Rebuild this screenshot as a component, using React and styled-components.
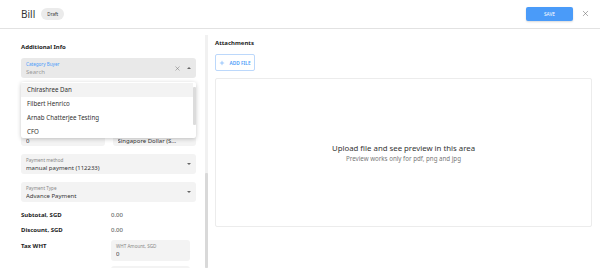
import React from "react";
import styled, { createGlobalStyle } from "styled-components";
import { X, Plus } from "lucide-react";

const GlobalStyle = createGlobalStyle`
	body {
		margin: 0;
		background: #fff;
		font-family: "Noto Sans", "Open Sans", sans-serif;
		color: #333;
		overflow: hidden;
	}
	* { box-sizing: border-box; }
`;

const Page = styled.div`
	width: 600px;
	height: 268px;
	display: flex;
	flex-flow: column nowrap;
	overflow: hidden;
`;

const Header = styled.header`
	height: 29px;
	flex: 0 0 29px;
	display: flex;
	align-items: center;
	padding: 0 10px 1px 21px;
	border-bottom: 1px solid #e2e2e2;
`;

const Title = styled.h1`
	margin: 0;
	font-size: 10px;
	font-weight: 400;
	color: #333;
	line-height: 14px;
`;

const Chip = styled.span`
	margin-left: 6px;
	height: 12px;
	width: 23px;
	text-align: center;
	border-radius: 6px;
	background: #ebebeb;
	font-size: 4.5px;
	line-height: 12px;
	color: #333;
`;

const Spacer = styled.div`
	flex: 1;
`;

const SaveButton = styled.button`
	width: 47px;
	height: 14px;
	border: none;
	border-radius: 2px;
	background: #4a9bf9;
	color: #fff;
	font-family: inherit;
	font-size: 4.8px;
	padding: 0;
	box-shadow: 0 1px 2px rgba(0, 0, 0, 0.15);
`;

const IconButton = styled.span`
	display: flex;
	margin-left: 8px;
	color: #666;
`;

const Body = styled.div`
	flex: 1;
	display: flex;
	flex-flow: row nowrap;
	min-height: 0;
`;

const LeftPane = styled.div`
	width: 175px;
	flex: none;
	margin-left: 21px;
	padding-top: 13px;
	display: flex;
	flex-flow: column nowrap;
`;

const Scrollbar = styled.div`
	width: 3px;
	flex: none;
	margin: 6px 0 0 9px;
	background: #f1f1f1;
	display: flex;
	flex-flow: column nowrap;
	justify-content: flex-end;
`;

const Thumb = styled.div`
	height: ${(p) => p.$h}px;
	background: #d9d9d9;
	border-radius: 1px;
`;

const RightPane = styled.div`
	flex: 1;
	margin-left: 7px;
	padding: 9px 8px 0 0;
	display: flex;
	flex-flow: column nowrap;
	align-items: flex-start;
`;

const SectionTitle = styled.h2`
	margin: 0;
	font-size: 6px;
	line-height: 10px;
	font-weight: 700;
	color: #222;
`;

const Stack = styled.div`
	margin-top: 6px;
	display: flex;
	flex-flow: column nowrap;
	gap: 8px;
`;

const Row = styled.div`
	display: flex;
	gap: 8px;
`;

const FieldBox = styled.div`
	position: relative;
	flex: ${(p) => (p.$grow ? "1 1 0" : "none")};
	min-width: 0;
	height: ${(p) => p.$h || 20}px;
	border-radius: 3px;
	background: ${(p) => (p.$focused ? "#e9e9e9" : "#f3f3f3")};
	padding: 3px 12px 0 5px;
	display: flex;
	flex-flow: column nowrap;
	justify-content: ${(p) => (p.$bottom ? "flex-end" : "flex-start")};
`;

const FieldLabel = styled.span`
	font-size: 4.6px;
	line-height: 6px;
	color: ${(p) => (p.$focused ? "#4a9bf9" : "#888")};
`;

const FieldValue = styled.span`
	font-size: 6px;
	line-height: 10px;
	color: ${(p) => (p.$muted ? "#999" : "#333")};
	white-space: nowrap;
	overflow: hidden;
`;

const Adornments = styled.div`
	position: absolute;
	right: 5px;
	top: 0;
	bottom: 0;
	display: flex;
	align-items: center;
	gap: 6px;
	color: #666;
`;

const Caret = styled.span`
	width: 0;
	height: 0;
	border-left: 2.5px solid transparent;
	border-right: 2.5px solid transparent;
	${(p) =>
		p.$up
			? "border-bottom: 2.5px solid #666;"
			: "border-top: 2.5px solid #666;"}
`;

const Menu = styled.div`
	position: absolute;
	top: 24px;
	left: 0;
	right: 0;
	height: 56px;
	z-index: 5;
	background: #fff;
	border-radius: 2px;
	box-shadow: 0 1px 4px rgba(0, 0, 0, 0.22);
	display: flex;
	flex-flow: row nowrap;
	overflow: hidden;
	padding-top: 1px;
`;

const MenuList = styled.ul`
	flex: 1;
	margin: 0;
	padding: 0;
	list-style: none;
`;

const MenuItem = styled.li`
	height: 14px;
	padding-left: 6px;
	font-size: 6.2px;
	line-height: 14px;
	color: #333;
	background: ${(p) => (p.$active ? "#f3f3f3" : "transparent")};
`;

const MenuScroll = styled.div`
	width: 3px;
	padding-top: 4px;
`;

const MenuThumb = styled.div`
	height: 38px;
	background: #dcdcdc;
	border-radius: 1px;
`;

const Summary = styled.div`
	margin-top: 6px;
	display: grid;
	grid-template-columns: 90px 79px;
	grid-auto-rows: minmax(15px, auto);
	align-items: center;
`;

const SumLabel = styled.span`
	font-size: 6px;
	font-weight: 700;
	color: #222;
	align-self: ${(p) => (p.$top ? "start" : "center")};
	line-height: ${(p) => (p.$top ? "13px" : "15px")};
	padding-top: ${(p) => (p.$top ? "2px" : "0")};
`;

const SumValue = styled.span`
	font-size: 6px;
	color: #444;
	line-height: 15px;
`;

const WhtFields = styled.div`
	padding-top: 2px;
	display: flex;
	flex-flow: column nowrap;
	gap: 5px;
`;

const AddFile = styled.button`
	margin-top: 6px;
	height: 17px;
	width: 40px;
	padding: 0;
	border: 1px solid #bcd8fb;
	border-radius: 2px;
	background: #fff;
	color: #4a9bf9;
	font-family: inherit;
	font-size: 4.8px;
	font-weight: 600;
	display: flex;
	align-items: center;
	justify-content: center;
	gap: 4px;
`;

const Preview = styled.div`
	margin-top: 7px;
	width: 100%;
	height: 149px;
	border: 1px solid #ececec;
	border-radius: 2px;
	display: flex;
	flex-flow: column nowrap;
	align-items: center;
	justify-content: center;
	padding-top: 1px;
`;

const PreviewTitle = styled.div`
	font-size: 7.8px;
	line-height: 12px;
	color: #333;
`;

const PreviewHint = styled.div`
	font-size: 6.2px;
	line-height: 10px;
	color: #777;
`;

const buyers = ["Chirashree Dan", "Filbert Henrico", "Arnab Chatterjee Testing", "CFO"];

const Field = ({ label, value, select, h, bottom, grow }) => (
	<FieldBox $h={h} $bottom={bottom} $grow={grow}>
		{label && <FieldLabel>{label}</FieldLabel>}
		{value && <FieldValue>{value}</FieldValue>}
		{select && (
			<Adornments>
				<Caret />
			</Adornments>
		)}
	</FieldBox>
);

const App = () => (
	<Page>
		<GlobalStyle />
		<Header>
			<Title>Bill</Title>
			<Chip>Draft</Chip>
			<Spacer />
			<SaveButton>SAVE</SaveButton>
			<IconButton>
				<X size={9} strokeWidth={1.4} />
			</IconButton>
		</Header>
		<Body>
			<LeftPane>
				<SectionTitle>Additional Info</SectionTitle>
				<Stack>
					<FieldBox $focused>
						<FieldLabel $focused>Category Buyer</FieldLabel>
						<FieldValue $muted>Search</FieldValue>
						<Adornments>
							<X size={7} strokeWidth={1.5} />
							<Caret $up />
						</Adornments>
						<Menu>
							<MenuList>
								{buyers.map((b, i) => (
									<MenuItem key={b} $active={i === 0}>
										{b}
									</MenuItem>
								))}
							</MenuList>
							<MenuScroll>
								<MenuThumb />
							</MenuScroll>
						</Menu>
					</FieldBox>
					<Field h={32} />
					<Row>
						<Field value="0" bottom grow />
						<Field value="Singapore Dollar (S..." select bottom grow />
					</Row>
					<Field label="Payment method" value="manual payment (112233)" select />
					<Field label="Payment Type" value="Advance Payment" select />
				</Stack>
				<Summary>
					<SumLabel>Subtotal, SGD</SumLabel>
					<SumValue>0.00</SumValue>
					<SumLabel>Discount, SGD</SumLabel>
					<SumValue>0.00</SumValue>
					<SumLabel $top>Tax WHT</SumLabel>
					<WhtFields>
						<Field label="WHT Amount, SGD" value="0" h={21} />
						<Field h={21} />
					</WhtFields>
				</Summary>
			</LeftPane>
			<Scrollbar>
				<Thumb $h={95} />
			</Scrollbar>
			<RightPane>
				<SectionTitle>Attachments</SectionTitle>
				<AddFile>
					<Plus size={6} strokeWidth={2} />
					ADD FILE
				</AddFile>
				<Preview>
					<PreviewTitle>Upload file and see preview in this area</PreviewTitle>
					<PreviewHint>Preview works only for pdf, png and jpg</PreviewHint>
				</Preview>
			</RightPane>
		</Body>
	</Page>
);

export default App;
